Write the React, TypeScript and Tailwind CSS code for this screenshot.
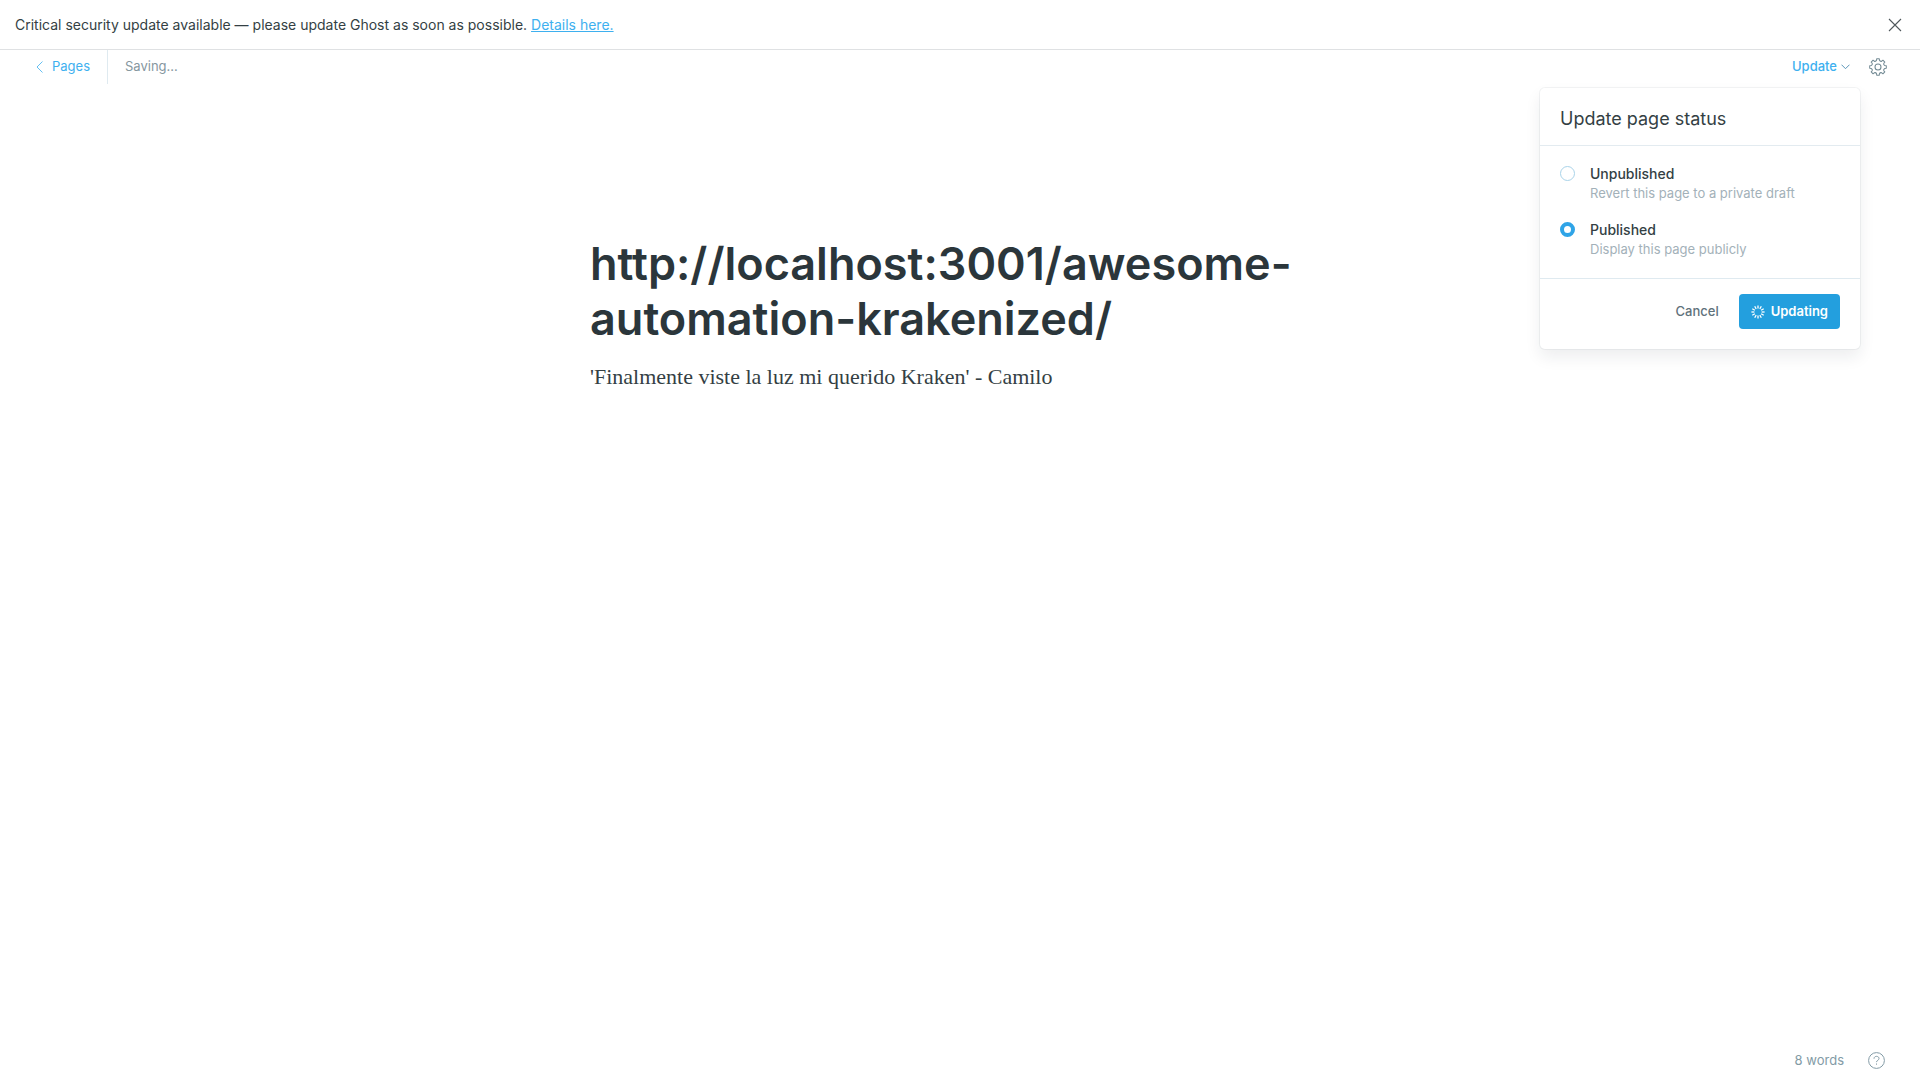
import { useState } from "react";

const spokes = Array.from({ length: 12 }, (_, i) => i * 30);

function polar(radius: number, degrees: number) {
  const a = (degrees * Math.PI) / 180;
  return `${(12 + radius * Math.sin(a)).toFixed(2)} ${(12 - radius * Math.cos(a)).toFixed(2)}`;
}

const gearOutline =
  Array.from({ length: 8 }, (_, i) => {
    const a = i * 45;
    return `${i === 0 ? "M" : "L"}${polar(11.2, a - 9)}L${polar(11.2, a + 9)}L${polar(9.2, a + 12)}Q${polar(7.6, a + 22.5)} ${polar(9.2, a + 33)}`;
  }).join("") + "Z";

function GearIcon() {
  return (
    <svg viewBox="0 0 24 24" className="size-[18px]" fill="none" stroke="currentColor" strokeWidth="1.4" strokeLinejoin="round" aria-hidden="true">
      <circle cx="12" cy="12" r="4" />
      <path d={gearOutline} />
    </svg>
  );
}

function Spinner() {
  return (
    <svg viewBox="0 0 14 14" className="size-3.5" stroke="white" strokeWidth="1.3" aria-hidden="true">
      {spokes.map((angle) => (
        <line key={angle} x1="7" y1="0.4" x2="7" y2="3.4" transform={`rotate(${angle} 7 7)`} />
      ))}
    </svg>
  );
}

type OptionProps = {
  id: string;
  title: string;
  hint: string;
  checked: boolean;
  onSelect: () => void;
};

function StatusOption({ id, title, hint, checked, onSelect }: OptionProps) {
  return (
    <div className="flex items-start gap-[15px]">
      <input
        type="radio"
        name="status"
        id={id}
        checked={checked}
        onChange={onSelect}
        className="mt-0.5 size-[15px] shrink-0 appearance-none rounded-full border border-[#a9d3e9] bg-white checked:border-4 checked:border-[#2fa4e7]"
      />
      <label htmlFor={id} className="flex flex-col">
        <span className="text-sm leading-5 font-medium text-[#343f44]">{title}</span>
        <span className="text-[13px] leading-[18px] text-[#a3b1b9]">{hint}</span>
      </label>
    </div>
  );
}

export default function App() {
  const [status, setStatus] = useState("published");
  return (
    <div className="flex min-h-screen flex-col bg-white font-['Inter',sans-serif] text-[#343f44]">
      <aside className="flex h-[50px] items-center justify-between border-b border-[#dfe1e3] pr-[18px] pl-[15px]">
        <p className="text-sm">
          Critical security update available — please update Ghost as soon as possible.{" "}
          <a href="#details" className="text-[#3eb0ef] underline">Details here.</a>
        </p>
        <button type="button" aria-label="Close" className="text-[#50585c]">
          <svg viewBox="0 0 14 14" className="size-3.5" fill="none" stroke="currentColor" strokeWidth="1.1" aria-hidden="true">
            <path d="M1 1l12 12M13 1L1 13" />
          </svg>
        </button>
      </aside>

      <header className="flex h-[34px] items-center justify-between pr-[33px] pl-9">
        <div className="flex h-full items-center text-[13px]">
          <a href="#pages" className="flex h-full items-center gap-2 border-r border-[#dfeaf0] pr-[17px] text-[#3eb0ef]">
            <svg viewBox="0 0 8 12" className="h-3 w-2" fill="none" stroke="currentColor" strokeWidth="0.8" aria-hidden="true">
              <path d="M6.500.5L1 6l5.500 5.500" />
            </svg>
            Pages
          </a>
          <span className="pl-[17px] text-[#86979f]">Saving...</span>
        </div>
        <div className="relative flex items-center gap-[19px]">
          <button type="button" className="flex items-center gap-1 text-[13px] font-medium text-[#3eb0ef]">
            Update
            <svg viewBox="0 0 9 6" className="h-1.5 w-[9px] text-[#5b96b8]" fill="none" stroke="currentColor" aria-hidden="true">
              <path d="M.5.7l4 4 4-4" />
            </svg>
          </button>
          <button type="button" aria-label="Settings" className="text-[#738a94]">
            <GearIcon />
          </button>

          <form
            onSubmit={(e) => e.preventDefault()}
            className="absolute top-[31px] right-[27px] w-80 rounded-[5px] bg-white shadow-[0_0_0_1px_rgba(99,114,130,0.08),0_8px_16px_rgba(27,39,51,0.08)]"
          >
            <h2 className="border-b border-[#e3ebf0] px-5 pt-[19px] pb-[14px] text-lg leading-6">Update page status</h2>
            <fieldset className="flex flex-col gap-[18px] border-b border-[#dfeaf0] px-5 pt-[18px] pb-5">
              <StatusOption id="unpublished" title="Unpublished" hint="Revert this page to a private draft" checked={status === "unpublished"} onSelect={() => setStatus("unpublished")} />
              <StatusOption id="published" title="Published" hint="Display this page publicly" checked={status === "published"} onSelect={() => setStatus("published")} />
            </fieldset>
            <footer className="flex items-center justify-end gap-5 px-5 pt-[15px] pb-5 text-[13px]">
              <button type="button" className="font-medium text-[#5f727b]">Cancel</button>
              <button type="submit" className="flex h-[35px] items-center gap-1.5 rounded bg-[#239fde] px-3 font-semibold text-white">
                <Spinner />
                Updating
              </button>
            </footer>
          </form>
        </div>
      </header>

      <main className="mx-auto mt-[152px] w-full max-w-[740px] flex-1">
        <h1 className="text-[45px] leading-[55px] font-semibold text-[#2b363b]">
          http://localhost:3001/awesome-automation-krakenized/
        </h1>
        <p className="mt-[15px] font-['Liberation_Serif',serif] text-[22px] leading-8">
          'Finalmente viste la luz mi querido Kraken' - Camilo
        </p>
      </main>

      <footer className="flex h-[39px] items-center justify-end gap-6 pr-[35px] text-[13px] text-[#839ba6]">
        <span>8 words</span>
        <button type="button" aria-label="Help">
          <svg viewBox="0 0 17 17" className="size-[17px]" fill="none" stroke="currentColor" aria-hidden="true">
            <circle cx="8.500" cy="8.500" r="7.900" />
            <path d="M6 6.700c0-3.200 5-3 5-.2 0 1.800-2.500 1.800-2.500 3.600M8.500 11.500v1.200" />
          </svg>
        </button>
      </footer>
    </div>
  );
}
